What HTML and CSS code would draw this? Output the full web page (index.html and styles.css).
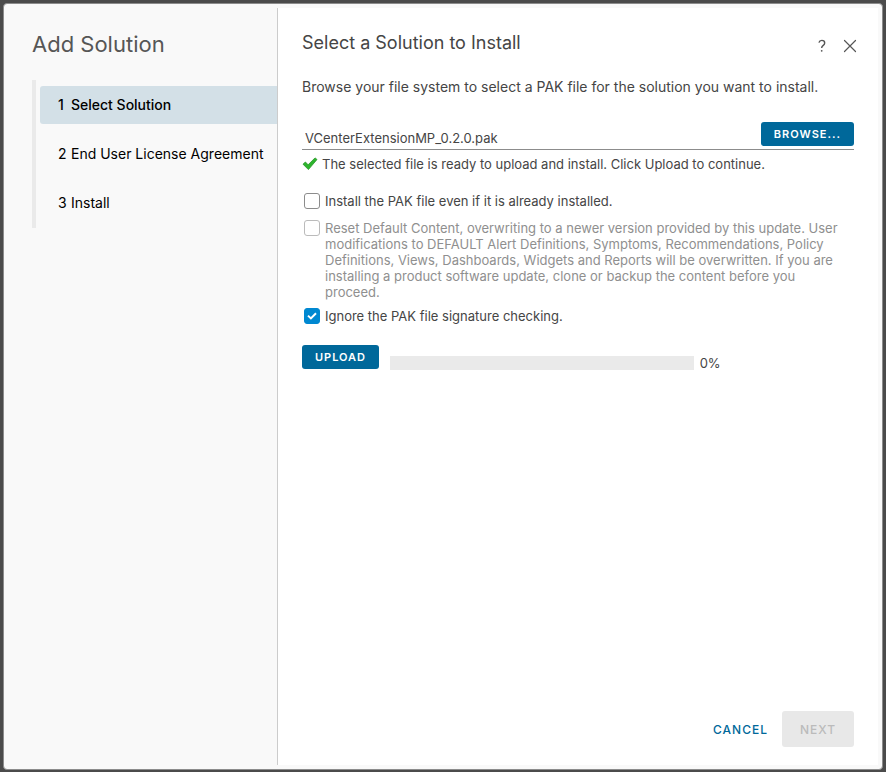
FILE: index.html
```html
<!DOCTYPE html>
<html lang="en">
<head>
<meta charset="utf-8">
<meta name="viewport" content="width=device-width, initial-scale=1">
<title>Add Solution</title>
<link rel="stylesheet" href="styles.css">
</head>
<body>
<div class="modal" role="dialog" aria-labelledby="wizard-title">
  <aside class="sidebar">
    <h1 class="wizard-title" id="wizard-title">Add Solution</h1>
    <ol class="steps">
      <li class="step step-active" aria-current="step"><span class="step-number">1</span>Select Solution</li>
      <li class="step"><span class="step-number">2</span>End User License Agreement</li>
      <li class="step"><span class="step-number">3</span>Install</li>
    </ol>
  </aside>
  <main class="page">
    <header class="page-header">
      <h2 class="page-title">Select a Solution to Install</h2>
      <button class="icon-button" type="button" aria-label="Help">
        <svg width="16" height="16" viewBox="0 0 16 16" fill="none" stroke="currentColor" stroke-width="1.4"><path d="M4.9 4.6C5.3 3.2 6.4 2.4 7.8 2.4c1.7 0 2.9 1 2.9 2.5 0 1.3-.8 2-1.7 2.7-.9.7-1.3 1.2-1.3 2.4"/><circle cx="7.7" cy="12.8" r=".9" fill="currentColor" stroke="none"/></svg>
      </button>
      <button class="icon-button" type="button" aria-label="Close">
        <svg width="16" height="16" viewBox="0 0 16 16" fill="none" stroke="currentColor" stroke-width="1.2" stroke-linecap="round"><path d="M2.5 2.5l11 11M13.5 2.5L2.5 13.5"/></svg>
      </button>
    </header>
    <p class="intro">Browse your file system to select a PAK file for the solution you want to install.</p>
    <div class="file-row">
      <input class="file-name" type="text" aria-label="PAK file" value="VCenterExtensionMP_0.2.0.pak">
      <button class="button" type="button">BROWSE...</button>
    </div>
    <p class="status">
      <svg width="16" height="14" viewBox="0 0 16 14"><path d="M1 7.2L3.4 5l2.7 2.8L13 .9l2 1.6L6.4 12.6z" fill="#2db52d" stroke="#249424" stroke-width=".8" stroke-linejoin="round"/></svg>
      The selected file is ready to upload and install. Click Upload to continue.
    </p>
    <div class="options">
      <div class="option">
        <input class="check" type="checkbox" id="force">
        <label for="force">Install the PAK file even if it is already installed.</label>
      </div>
      <div class="option option-disabled">
        <input class="check" type="checkbox" id="reset" disabled>
        <label for="reset">Reset Default Content, overwriting to a newer version provided by this update. User modifications to DEFAULT Alert Definitions, Symptoms, Recommendations, Policy Definitions, Views, Dashboards, Widgets and Reports will be overwritten. If you are installing a product software update, clone or backup the content before you proceed.</label>
      </div>
      <div class="option">
        <span class="check-box">
          <input class="check" type="checkbox" id="ignore" checked>
          <svg class="check-mark" width="16" height="16" viewBox="0 0 16 16" fill="none" stroke="#fff" stroke-width="2"><path d="M4 7.6l2.9 2.8L12 5.2"/></svg>
        </span>
        <label for="ignore">Ignore the PAK file signature checking.</label>
      </div>
    </div>
    <div class="upload-row">
      <button class="button" type="button">UPLOAD</button>
      <div class="progress" role="progressbar" aria-label="Upload progress" aria-valuenow="0" aria-valuemin="0" aria-valuemax="100"></div>
      <span class="percent">0%</span>
    </div>
    <footer class="actions">
      <button class="action action-link" type="button">CANCEL</button>
      <button class="action action-next" type="button" disabled>NEXT</button>
    </footer>
  </main>
</div>
</body>
</html>
```
FILE: styles.css
```css
* {
  box-sizing: border-box;
}

body {
  margin: 0;
  padding: 3px 3px 2px;
  min-height: 100vh;
  display: flex;
  background: #4b4b4b;
  color: #454545;
  font: 13px/16px Inter, "Open Sans", sans-serif;
}

h1, h2, p, ol {
  margin: 0;
  padding: 0;
  font-weight: 400;
}

button, input {
  font-family: inherit;
  margin: 0;
}

.modal {
  flex: 1;
  display: grid;
  grid-template-columns: 273px minmax(0, 1fr);
  padding: 4px 4px 4px 0;
  background: #f9f9f9;
  border: 1px solid #8c8c8c;
  border-radius: 4px;
}

.sidebar {
  padding: 24px 0 0 28px;
}

.wizard-title {
  font-size: 22px;
  line-height: 24px;
  color: #565656;
}

.steps {
  display: grid;
  gap: 11px;
  margin-top: 24px;
  padding: 6px 0 6px 4px;
  border-left: 4px solid #eaeaea;
  list-style: none;
}

.step {
  padding: 7px 0 7px 18px;
  font-size: 14px;
  line-height: 24px;
  color: #000;
  white-space: nowrap;
}

.step-active {
  background: #d3e0e7;
  border-radius: 3px 0 0 3px;
  font-weight: 500;
}

.step-number {
  display: inline-block;
  width: 13px;
}

.page {
  display: flex;
  flex-direction: column;
  padding: 23px 24px 18px;
  background: #fff;
  border-left: 1px solid #ccc;
}

.page-header {
  display: flex;
  align-items: center;
  gap: 12px;
  margin-right: -4px;
}

.page-title {
  flex: 1;
  font-size: 18px;
  line-height: 24px;
}

.icon-button {
  display: flex;
  padding: 5px 0 0;
  width: 16px;
  border: 0;
  background: none;
  color: #565656;
}

.intro {
  margin-top: 20px;
  font-size: 14px;
  line-height: 24px;
}

.file-row {
  display: flex;
  align-items: flex-end;
  margin-top: 23px;
  padding-bottom: 3px;
  border-bottom: 1px solid #8c8c8c;
}

.file-name {
  flex: 1;
  min-width: 0;
  height: 16px;
  padding: 0 3px;
  border: 0;
  background: none;
  color: inherit;
  font-size: 13px;
}

.button {
  height: 24px;
  padding: 0 13px;
  border: 0;
  border-radius: 3px;
  background: #00689a;
  color: #fff;
  font-size: 11px;
  font-weight: 600;
  letter-spacing: 1px;
}

.status {
  display: flex;
  align-items: center;
  gap: 4px;
  margin-top: 6px;
}

.options {
  display: grid;
  gap: 11px;
  margin: 21px 4px 21px 2px;
}

.option {
  display: flex;
  gap: 5px;
}

.option-disabled {
  color: #8f8f8f;
}

.option + .option:last-child {
  margin-top: -3px;
}

.check {
  flex: none;
  display: block;
  appearance: none;
  width: 16px;
  height: 16px;
  border: 1px solid #8c8c8c;
  border-radius: 3px;
  background: #fff;
}

.check:disabled {
  border-color: #bbb;
}

.check:checked {
  border-color: #0088d1;
  background: #0088d1;
}

.check-box {
  position: relative;
}

.check-mark {
  position: absolute;
  inset: 0;
  pointer-events: none;
}

.upload-row {
  display: flex;
  align-items: flex-end;
}

.progress {
  width: 55%;
  height: 14px;
  margin: 0 6px 0 11px;
  background: #eaeaea;
}

.percent {
  line-height: 14px;
}

.upload-row .button {
  margin-bottom: 1px;
}

.actions {
  display: flex;
  justify-content: flex-end;
  margin-top: auto;
}

.action {
  height: 36px;
  padding: 0 14px;
  border: 0;
  border-radius: 3px;
  font-size: 12px;
  font-weight: 500;
  letter-spacing: 1px;
}

.action-link {
  background: none;
  color: #00689a;
}

.action-next {
  width: 72px;
  background: #e8e8e8;
  color: #bbb;
}
```
